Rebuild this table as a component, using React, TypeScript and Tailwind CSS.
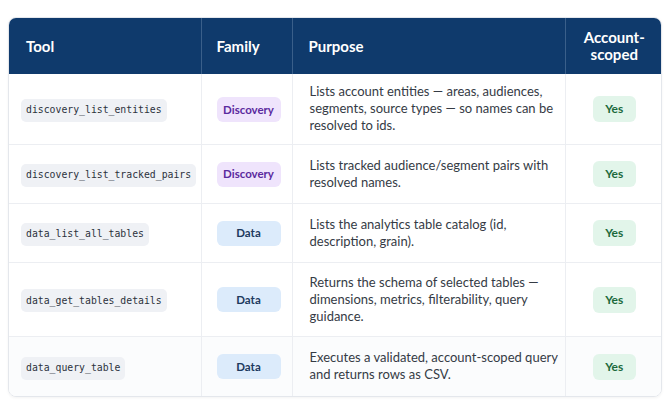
import React from 'react';

type Row = {
  tool: string;
  family: 'Discovery' | 'Data';
  purpose: string;
  h: string;
};

const ROWS: Row[] = [
  {
    tool: 'discovery_list_entities',
    family: 'Discovery',
    purpose: 'Lists account entities — areas, audiences, segments, source types — so names can be resolved to ids.',
    h: 'h-[70px]',
  },
  {
    tool: 'discovery_list_tracked_pairs',
    family: 'Discovery',
    purpose: 'Lists tracked audience/segment pairs with resolved names.',
    h: 'h-[59px]',
  },
  {
    tool: 'data_list_all_tables',
    family: 'Data',
    purpose: 'Lists the analytics table catalog (id, description, grain).',
    h: 'h-[59px]',
  },
  {
    tool: 'data_get_tables_details',
    family: 'Data',
    purpose: 'Returns the schema of selected tables — dimensions, metrics, filterability, query guidance.',
    h: 'h-[74px]',
  },
  {
    tool: 'data_query_table',
    family: 'Data',
    purpose: 'Executes a validated, account-scoped query and returns rows as CSV.',
    h: 'h-[60px]',
  },
];

const FamilyBadge = ({ family }: { family: Row['family'] }) => (
  <span
    className={
      family === 'Discovery'
        ? 'inline-flex h-[25px] w-[64px] items-center justify-center rounded-md bg-[#efe4fc] text-[11.5px] font-bold text-[#5b2a9e]'
        : 'inline-flex h-[25px] w-[64px] items-center justify-center rounded-md bg-[#dcebfb] text-[11.5px] font-bold text-[#1d3a5e]'
    }
  >
    {family}
  </span>
);

export default function App() {
  return (
    <div className="min-h-[419px] w-[670px] bg-white pl-2 pt-[17px] font-['Lato',sans-serif]">
      <div className="w-[654px] overflow-hidden rounded-lg border border-[#e4e7ec] shadow-[0_1px_3px_rgba(0,0,0,0.05)]">
        <table className="w-full table-fixed border-collapse">
          <thead>
            <tr className="h-[56px] bg-[#0f3a6c] text-left text-[15px] font-bold leading-[17px] text-white">
              <th className="w-[192px] px-[17px] font-bold">Tool</th>
              <th className="w-[91px] border-l border-[#3a5f8a] px-[15px] font-bold">Family</th>
              <th className="w-[273px] border-l border-[#3a5f8a] px-[16px] font-bold">Purpose</th>
              <th className="w-[98px] border-l border-[#3a5f8a] px-2 text-center font-bold">
                Account-
                <br />
                scoped
              </th>
            </tr>
          </thead>
          <tbody>
            {ROWS.map((r, i) => (
              <tr
                key={r.tool}
                className={`${r.h} ${i === ROWS.length - 1 ? 'bg-[#fbfcfd]' : 'bg-white'} ${
                  i > 0 ? 'border-t border-[#eceef2]' : ''
                }`}
              >
                <td className="pl-3 pr-1 align-middle">
                  <span className="inline-flex h-[23px] items-center rounded-[5px] bg-[#eff1f5] px-[5px] font-['DejaVu_Sans_Mono',monospace] text-[9.8px] text-[#2c323c]">
                    {r.tool}
                  </span>
                </td>
                <td className="border-l border-[#eceef2] pl-[15px] align-middle">
                  <FamilyBadge family={r.family} />
                </td>
                <td className="border-l border-[#eceef2] pl-[17px] pr-[5px] align-middle text-[13px] leading-[17px] text-[#353b45]">
                  {r.purpose}
                </td>
                <td className="border-l border-[#eceef2] text-center align-middle">
                  <span className="inline-flex h-[26px] w-[43px] items-center justify-center rounded-md bg-[#e2f5ea] text-[12px] font-bold text-[#1b6a3c]">
                    Yes
                  </span>
                </td>
              </tr>
            ))}
          </tbody>
        </table>
      </div>
    </div>
  );
}
